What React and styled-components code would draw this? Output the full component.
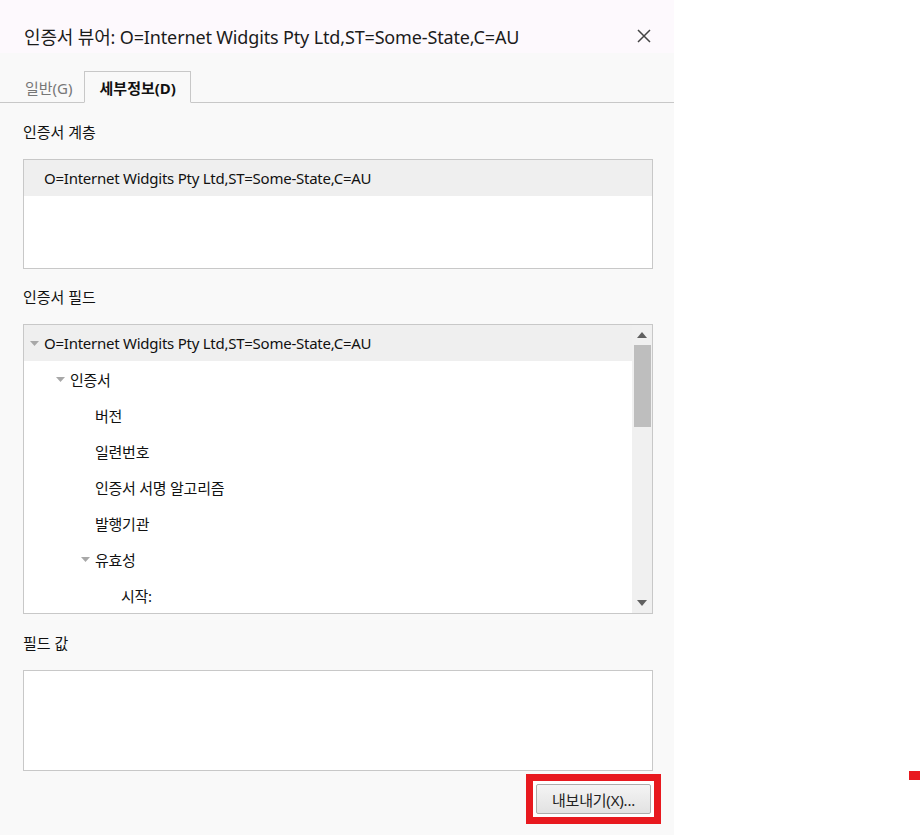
import React from 'react';
import styled, { createGlobalStyle } from 'styled-components';

const GlobalStyle = createGlobalStyle`
    body {
        margin: 0;
        background: #ffffff;
        font-family: "Noto Sans", "Noto Sans CJK KR", sans-serif;
        color: #111111;
    }
`;

const Page = styled.div`
    position: relative;
    width: 920px;
    height: 835px;
    overflow: hidden;
    background: #ffffff;
`;

const Dialog = styled.div`
    width: 674px;
    height: 835px;
    background: #f9f9f9;
    display: flex;
    flex-direction: column;
`;

const TitleBar = styled.div`
    height: 53px;
    box-sizing: border-box;
    padding: 24px 22px 6px 24px;
    background: #fdf9fd;
    display: flex;
    align-items: center;
    justify-content: space-between;
`;

const Title = styled.h1`
    margin: 0;
    font-size: 18px;
    font-weight: 400;
    letter-spacing: -0.15px;
    color: #1b1b1b;
    white-space: nowrap;
`;

const CloseButton = styled.button`
    border: none;
    background: transparent;
    padding: 0;
    width: 16px;
    height: 16px;
    display: flex;
    align-items: center;
    justify-content: center;
    color: #444444;
`;

const TabStrip = styled.div`
    height: 50px;
    box-sizing: border-box;
    display: flex;
    align-items: flex-end;
    border-bottom: 1px solid #c8c8c8;
    padding-left: 12px;
`;

const Tab = styled.div`
    height: 32px;
    box-sizing: border-box;
    padding: ${p => (p.$active ? '0 14px 0 15px' : '0 10px 0 12px')};
    margin-bottom: -1px;
    display: flex;
    align-items: center;
    font-size: 15px;
    font-weight: ${p => (p.$active ? 700 : 400)};
    color: ${p => (p.$active ? '#111111' : '#777777')};
    border: 1px solid ${p => (p.$active ? '#c8c8c8' : 'transparent')};
    border-bottom-color: ${p => (p.$active ? '#f9f9f9' : 'transparent')};
    background: ${p => (p.$active ? '#f9f9f9' : 'transparent')};
`;

const Content = styled.div`
    padding: 1px 21px 0 23px;
    display: flex;
    flex-direction: column;
`;

const SectionLabel = styled.div`
    margin-top: ${p => p.$top || 18}px;
    margin-bottom: 17px;
    height: 20px;
    line-height: 20px;
    font-size: 15px;
`;

const Box = styled.div`
    position: relative;
    height: ${p => p.$height}px;
    box-sizing: border-box;
    border: 1px solid #c8c8c8;
    background: #ffffff;
    display: flex;
    overflow: hidden;
`;

const List = styled.div`
    flex: 1;
    display: flex;
    flex-direction: column;
`;

const Row = styled.div`
    height: 36px;
    flex-shrink: 0;
    display: flex;
    align-items: center;
    padding-left: ${p => p.$indent}px;
    font-size: 15px;
    letter-spacing: -0.25px;
    white-space: nowrap;
    background: ${p => (p.$selected ? '#efefef' : 'transparent')};
`;

const Toggle = styled.span`
    width: 16px;
    flex-shrink: 0;
    display: flex;
    align-items: center;
    padding-left: 2px;
    box-sizing: border-box;
`;

const ScrollBar = styled.div`
    width: 20px;
    flex-shrink: 0;
    background: #f0f0f0;
    display: flex;
    flex-direction: column;
    align-items: center;
`;

const ScrollArrow = styled.div`
    height: 20px;
    display: flex;
    align-items: center;
    justify-content: center;
`;

const ScrollThumb = styled.div`
    width: 17px;
    height: 82px;
    background: #bebebe;
`;

const ScrollTrack = styled.div`
    flex: 1;
`;

const Footer = styled.div`
    display: flex;
    justify-content: flex-end;
    padding-right: 13px;
    margin-top: 3px;
`;

const Highlight = styled.div`
    border: 7px solid #e8191f;
    background: #ffffff;
    padding: 3px;
`;

const ExportButton = styled.button`
    width: 115px;
    height: 30px;
    box-sizing: border-box;
    border: 1px solid #adadad;
    border-radius: 2px;
    background: linear-gradient(#f4f4f4, #e2e2e2);
    font-family: "Noto Sans", "Noto Sans CJK KR", sans-serif;
    font-size: 15px;
    letter-spacing: -0.2px;
    color: #222222;
    padding: 0;
`;

const RedMark = styled.div`
    position: absolute;
    left: 909px;
    top: 771px;
    width: 11px;
    height: 9px;
    background: #e8191f;
`;

const Caret = ({ up }) => (
    <svg width="10" height="6" viewBox="0 0 10 6">
        <path d={up ? 'M0 6 L5 0 L10 6 Z' : 'M0 0 L10 0 L5 6 Z'} fill="#606060" />
    </svg>
);

const TreeCaret = () => (
    <svg width="9" height="5" viewBox="0 0 9 5">
        <path d="M0 0 L9 0 L4.5 5 Z" fill="#a8a8a8" />
    </svg>
);

const SUBJECT = 'O=Internet Widgits Pty Ltd,ST=Some-State,C=AU';

const fields = [
    { label: SUBJECT, level: 0, open: true, selected: true },
    { label: '인증서', level: 1, open: true },
    { label: '버전', level: 2 },
    { label: '일련번호', level: 2 },
    { label: '인증서 서명 알고리즘', level: 2 },
    { label: '발행기관', level: 2 },
    { label: '유효성', level: 2, open: true },
    { label: '시작:', level: 3 },
];

const App = () => {
    return (
        <Page>
            <GlobalStyle />
            <Dialog>
                <TitleBar>
                    <Title>인증서 뷰어: {SUBJECT}</Title>
                    <CloseButton aria-label="닫기">
                        <svg width="14" height="14" viewBox="0 0 14 14">
                            <path d="M1 1 L13 13 M13 1 L1 13" stroke="currentColor" strokeWidth="1.5" />
                        </svg>
                    </CloseButton>
                </TitleBar>
                <TabStrip>
                    <Tab>일반(G)</Tab>
                    <Tab $active>세부정보(D)</Tab>
                </TabStrip>
                <Content>
                    <SectionLabel>인증서 계층</SectionLabel>
                    <Box $height={110}>
                        <List>
                            <Row $indent={20} $selected>{SUBJECT}</Row>
                        </List>
                    </Box>

                    <SectionLabel>인증서 필드</SectionLabel>
                    <Box $height={290}>
                        <List>
                            {fields.map((f, i) => (
                                <Row key={i} $indent={Math.round(4 + f.level * 25.5)} $selected={f.selected}>
                                    <Toggle>{f.open && <TreeCaret />}</Toggle>
                                    {f.label}
                                </Row>
                            ))}
                        </List>
                        <ScrollBar>
                            <ScrollArrow><Caret up /></ScrollArrow>
                            <ScrollThumb />
                            <ScrollTrack />
                            <ScrollArrow><Caret /></ScrollArrow>
                        </ScrollBar>
                    </Box>

                    <SectionLabel $top={19}>필드 값</SectionLabel>
                    <Box $height={101} />
                </Content>
                <Footer>
                    <Highlight>
                        <ExportButton>내보내기(X)...</ExportButton>
                    </Highlight>
                </Footer>
            </Dialog>
            <RedMark />
        </Page>
    );
};

export default App;
